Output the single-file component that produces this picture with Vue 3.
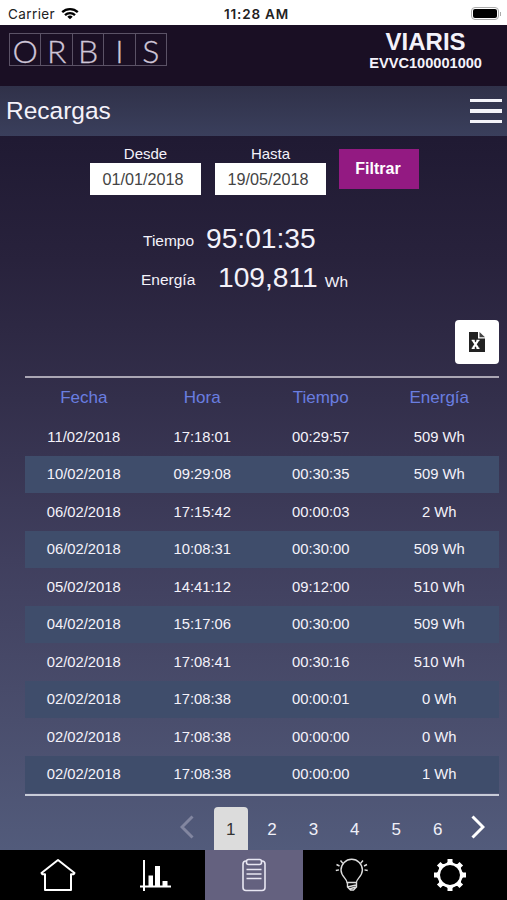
<template>
  <div class="app">
    <div class="status">
      <div class="carrier">
        <span>Carrier</span>
        <svg width="18" height="13" viewBox="0 0 18 13" fill="none" stroke="#000" stroke-width="2.3">
          <path d="M1.2 5.2a11.2 11.2 0 0 1 15.6 0" />
          <path d="M4 8.2a7.2 7.2 0 0 1 10 0" />
          <path d="M9 12.3 6.3 9.7a3.9 3.9 0 0 1 5.4 0z" fill="#000" stroke="none" />
        </svg>
      </div>
      <div class="clock">11:28 AM</div>
      <div class="power">
        <div class="battery"><div class="charge"></div></div>
        <div class="battery-tip"></div>
      </div>
    </div>

    <header class="header">
      <div class="logo">
        <span v-for="letter in 'ORBIS'" :key="letter">{{ letter }}</span>
      </div>
      <div class="device">
        <div class="device-name">VIARIS</div>
        <div class="device-serial">EVVC100001000</div>
      </div>
    </header>

    <div class="title-bar">
      <h1>Recargas</h1>
      <button class="burger"><i></i><i></i><i></i></button>
    </div>

    <main class="content">
      <div class="filters">
        <label class="field">
          <span>Desde</span>
          <input v-model="from" type="text" />
        </label>
        <label class="field">
          <span>Hasta</span>
          <input v-model="to" type="text" />
        </label>
        <button class="filter-btn">Filtrar</button>
      </div>

      <div class="totals">
        <div class="total">
          <span class="label">Tiempo</span><span class="value">95:01:35</span>
        </div>
        <div class="total energy">
          <span class="label">Energía</span><span class="value">109,811</span><span class="unit">Wh</span>
        </div>
      </div>

      <div class="export">
        <button class="export-btn">
          <svg width="16" height="20" viewBox="0 0 16 20">
            <path d="M0 0h9v6.5h7V20H0z" fill="#222" />
            <path d="M10.5 0 16 5.3h-5.500z" fill="#444" />
            <path d="M4 8.5 9 16.200M9 8.500 4 16.200" stroke="#fff" stroke-width="2.200" />
            <path d="M2.700 8.300h3M7.500 8.300h3M2.700 16.400h3M7.500 16.400h3" stroke="#fff" stroke-width="1.200" />
          </svg>
        </button>
      </div>

      <table class="charges">
        <thead>
          <tr>
            <th v-for="col in columns" :key="col">{{ col }}</th>
          </tr>
        </thead>
        <tbody>
          <tr v-for="(row, i) in rows" :key="i">
            <td v-for="(cell, j) in row" :key="j">{{ cell }}</td>
          </tr>
        </tbody>
      </table>

      <div class="pagination">
        <button class="arrow prev">
          <svg width="14" height="24" viewBox="0 0 14 24"><path d="M12.500 1.500 2 12l10.500 10.500" /></svg>
        </button>
        <button v-for="n in 6" :key="n" class="page" :class="{ current: n === page }" @click="page = n">
          {{ n }}
        </button>
        <button class="arrow next">
          <svg width="14" height="24" viewBox="0 0 14 24"><path d="M1.500 1.500 12 12 1.500 22.500" /></svg>
        </button>
      </div>
    </main>

    <nav class="tabs">
      <a class="tab">
        <svg width="36" height="34" viewBox="0 0 36 34" fill="none" stroke="#fff" stroke-width="2" stroke-linejoin="round">
          <path d="M18 2 1.500 15l.8 1.200h2.700V32h26V16.200h2.700l.8-1.200z" />
        </svg>
      </a>
      <a class="tab">
        <svg width="32" height="32" viewBox="0 0 32 32" fill="#fff">
          <path d="M3 1h2v31H3zM0 26.500h31v2H0zM8.500 16.500h4.500v11H8.500zM15 7h5v20h-5zM22.500 22h5v5h-5z" />
        </svg>
      </a>
      <a class="tab active">
        <svg width="26" height="34" viewBox="0 0 26 34" fill="none" stroke="#e8e6f2" stroke-width="1.600">
          <rect x="2" y="3" width="22" height="29.500" rx="3" />
          <rect x="5.500" y="1.500" width="15" height="5" rx="2" fill="#64617f" />
          <path d="M5.500 11.500h15M5.500 16h15M5.500 20.500h15" />
        </svg>
      </a>
      <a class="tab">
        <svg width="34" height="34" viewBox="0 0 34 34" fill="none" stroke="#ddd" stroke-width="1.400">
          <path d="M12 24.500c0-4-6-6-6-12.500a10.700 10.700 0 0 1 21.400 0c0 6.500-6 8.500-6 12.500z" />
          <path d="M12.500 24.500v4.500l3 3h3l3-3v-4.500M12.500 29l8.500-2M14 31l7-2" />
          <path d="M5.500 2.500l2.300 2.700M1.500 6.500l3 1.500M.8 12.500l3.200-.6M28 2.500l-2.300 2.700M32 6.500l-3 1.500M32.700 12.500l-3.200-.6" />
        </svg>
      </a>
      <a class="tab">
        <svg width="32" height="32" viewBox="0 0 32 32">
          <circle cx="16" cy="16" r="11.300" fill="none" stroke="#fff" stroke-width="2.600" />
          <path v-for="a in 8" :key="a" d="M12 4.500 13.500 3V0h5v3L20 4.500z" fill="#fff" :transform="`rotate(${a * 45} 16 16)`" />
        </svg>
      </a>
    </nav>
  </div>
</template>

<script setup>
import { ref } from 'vue'

const from = ref('01/01/2018')
const to = ref('19/05/2018')
const page = ref(1)

const columns = ['Fecha', 'Hora', 'Tiempo', 'Energía']

const rows = [
  ['11/02/2018', '17:18:01', '00:29:57', '509 Wh'],
  ['10/02/2018', '09:29:08', '00:30:35', '509 Wh'],
  ['06/02/2018', '17:15:42', '00:00:03', '2 Wh'],
  ['06/02/2018', '10:08:31', '00:30:00', '509 Wh'],
  ['05/02/2018', '14:41:12', '09:12:00', '510 Wh'],
  ['04/02/2018', '15:17:06', '00:30:00', '509 Wh'],
  ['02/02/2018', '17:08:41', '00:30:16', '510 Wh'],
  ['02/02/2018', '17:08:38', '00:00:01', '0 Wh'],
  ['02/02/2018', '17:08:38', '00:00:00', '0 Wh'],
  ['02/02/2018', '17:08:38', '00:00:00', '1 Wh'],
]
</script>

<style>
body {
  margin: 0;
  background: #000;
}
</style>

<style scoped>
.app {
  width: 507px;
  height: 900px;
  display: flex;
  flex-direction: column;
  overflow: hidden;
  color: #f4f2fa;
  font-family: 'Liberation Sans', Arial, sans-serif;
  background: linear-gradient(#1a0f24 25px, #201a33 140px, #28223c 260px, #332f4b 400px, #403f5e 560px, #4a4e6d 720px, #525b7b 850px);
}

button {
  padding: 0;
  border: 0;
  background: none;
  font-family: inherit;
}

.status {
  height: 25px;
  flex: none;
  box-sizing: border-box;
  padding: 2px 6px 0 8px;
  display: grid;
  grid-template-columns: 1fr auto 1fr;
  align-items: center;
  background: #fff;
  color: #222;
  font-family: Inter, sans-serif;
  font-size: 13.500px;
  letter-spacing: 0.400px;
}

.carrier {
  display: flex;
  align-items: center;
  gap: 6px;
}

.clock {
  padding-left: 4px;
  font-weight: 600;
  letter-spacing: 0.800px;
}

.power {
  display: flex;
  justify-content: flex-end;
  align-items: center;
  gap: 1px;
}

.battery {
  width: 24px;
  height: 9px;
  padding: 1px;
  border: 1px solid #aaa;
  border-radius: 4px;
}

.charge {
  height: 9px;
  border-radius: 2px;
  background: #000;
}

.battery-tip {
  width: 1px;
  height: 4px;
  background: #aaa;
}

.header {
  height: 61px;
  flex: none;
  box-sizing: border-box;
  padding: 8px 25px 0 9px;
  display: flex;
  justify-content: space-between;
  background: #1a0f24;
}

.logo {
  width: 156px;
  height: 31px;
  display: flex;
  border: 1px solid #5b5266;
}

.logo span {
  flex: 1;
  border-right: 1px solid #5b5266;
  font: 300 32px/33px Lato, sans-serif;
  text-align: center;
  color: #cfc6d8;
  -webkit-text-stroke: 0.300px #cfc6d8;
}

.logo span:last-child {
  border-right: 0;
}

.device {
  text-align: center;
  font-weight: bold;
}

.device-name {
  font-size: 24px;
  line-height: 17px;
}

.device-serial {
  margin-top: 5px;
  font-size: 14.600px;
  line-height: 17px;
}

.title-bar {
  height: 50px;
  flex: none;
  padding: 0 5px 0 6px;
  display: flex;
  justify-content: space-between;
  align-items: center;
  background: linear-gradient(#303149, #3a3f5c);
}

.title-bar h1 {
  margin: 0;
  font-size: 24.500px;
  font-weight: normal;
}

.burger {
  width: 32px;
  display: flex;
  flex-direction: column;
  gap: 7px;
}

.burger i {
  height: 3.500px;
  background: #f4f4fa;
}

.content {
  height: 714px;
  display: flex;
  flex-direction: column;
}

.filters {
  height: 80px;
  padding: 9px 0 0 90px;
  box-sizing: border-box;
  display: flex;
  align-items: flex-start;
}

.field {
  width: 111px;
  margin-right: 14px;
  display: flex;
  flex-direction: column;
  text-align: center;
  font-size: 15px;
  line-height: 18px;
}

.field input {
  height: 32px;
  box-sizing: border-box;
  padding: 0 5px 0 0;
  border: 0;
  background: #fff;
  color: #444;
  font: 16.200px 'Liberation Sans', Arial, sans-serif;
  text-align: center;
}

.filter-btn {
  width: 80px;
  height: 40px;
  margin-top: 4px;
  margin-left: -1px;
  padding-right: 2px;
  background: #931a82;
  color: #fff;
  font-size: 16px;
  font-weight: bold;
}

.totals {
  height: 104px;
  padding-left: 141px;
}

.total {
  height: 39px;
  display: flex;
  align-items: baseline;
  line-height: 44px;
  font-size: 15.500px;
}

.label {
  width: 63px;
  padding-left: 2px;
  position: relative;
  top: -2px;
}

.value {
  font-size: 28.200px;
}

.energy .label {
  width: 77px;
  padding-left: 0;
}

.unit {
  margin-left: 7px;
}

.export {
  height: 56px;
  padding-right: 8px;
  display: flex;
  justify-content: flex-end;
}

.export-btn {
  width: 44px;
  height: 44px;
  display: flex;
  align-items: center;
  justify-content: center;
  border-radius: 4px;
  background: #fff;
}

.charges {
  width: 474px;
  margin-left: 25px;
  table-layout: fixed;
  border-spacing: 0;
  border-top: 2px solid #aaa6b4;
  border-bottom: 2px solid #c8ccd8;
  padding-bottom: 1px;
  text-align: center;
}

.charges th {
  height: 40px;
  padding: 0 1px 0 0;
  color: #6a7ee0;
  font-size: 17px;
  font-weight: normal;
}

.charges td {
  height: 37.500px;
  padding: 0 1px 0 0;
  font-size: 14.800px;
}

.charges tbody tr:nth-child(even) {
  background: #3f4d6b;
}

.pagination {
  height: 43px;
  margin: 11px 22px 0 0;
  display: flex;
  align-items: center;
  justify-content: flex-end;
}

.page {
  width: 34px;
  height: 43px;
  margin-right: 7.400px;
  color: #f0f0f8;
  font-size: 17px;
  line-height: 45px;
}

.page.current {
  border-radius: 4px 4px 0 0;
  background: #dcdcdc;
  color: #333;
}

.arrow {
  display: flex;
  margin-top: -3px;
}

.arrow path {
  fill: none;
  stroke: #fff;
  stroke-width: 3;
}

.prev {
  margin-right: 20px;
}

.prev path {
  stroke: #8286a0;
}

.next {
  margin-left: 9px;
}

.tabs {
  height: 50px;
  flex: none;
  padding-left: 9px;
  display: flex;
  background: #000;
}

.tab {
  width: 98px;
  display: flex;
  align-items: center;
  justify-content: center;
}

.tab.active {
  background: #64617f;
}
</style>
